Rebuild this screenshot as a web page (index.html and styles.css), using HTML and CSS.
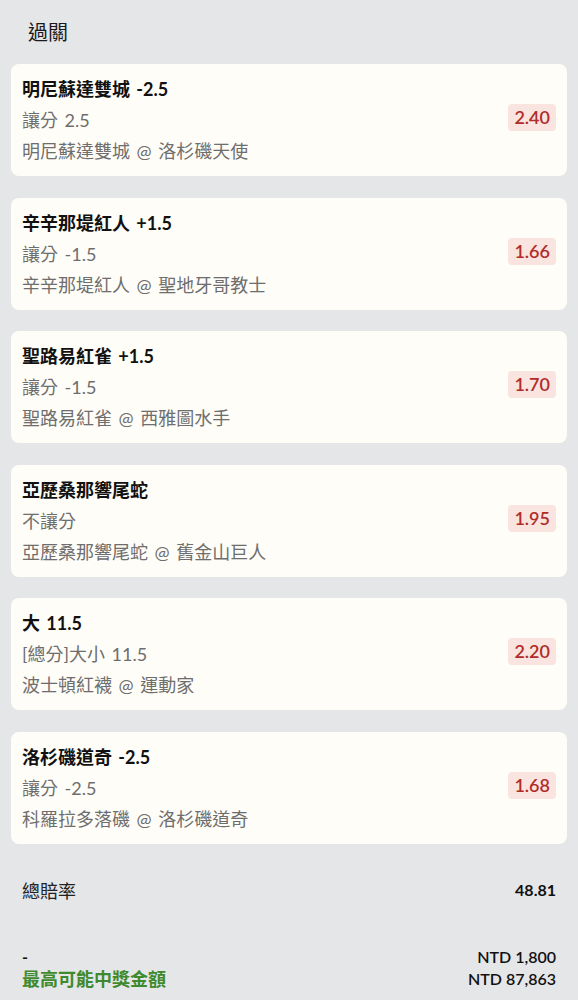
FILE: index.html
```html
<!DOCTYPE html>
<html lang="zh-Hant">
<head>
<meta charset="utf-8">
<link rel="stylesheet" href="styles.css">
</head>
<body>
<div class="page">
  <div class="header">過關</div>
  <div class="cards">
    <div class="card">
      <div class="info">
        <div class="title">明尼蘇達雙城 -2.5</div>
        <div class="sub">讓分 2.5</div>
        <div class="sub">明尼蘇達雙城 @ 洛杉磯天使</div>
      </div>
      <div class="odds">2.40</div>
    </div>
    <div class="card">
      <div class="info">
        <div class="title">辛辛那堤紅人 +1.5</div>
        <div class="sub">讓分 -1.5</div>
        <div class="sub">辛辛那堤紅人 @ 聖地牙哥教士</div>
      </div>
      <div class="odds">1.66</div>
    </div>
    <div class="card">
      <div class="info">
        <div class="title">聖路易紅雀 +1.5</div>
        <div class="sub">讓分 -1.5</div>
        <div class="sub">聖路易紅雀 @ 西雅圖水手</div>
      </div>
      <div class="odds">1.70</div>
    </div>
    <div class="card">
      <div class="info">
        <div class="title">亞歷桑那響尾蛇</div>
        <div class="sub">不讓分</div>
        <div class="sub">亞歷桑那響尾蛇 @ 舊金山巨人</div>
      </div>
      <div class="odds">1.95</div>
    </div>
    <div class="card">
      <div class="info">
        <div class="title">大 11.5</div>
        <div class="sub">[總分]大小 11.5</div>
        <div class="sub">波士頓紅襪 @ 運動家</div>
      </div>
      <div class="odds">2.20</div>
    </div>
    <div class="card">
      <div class="info">
        <div class="title">洛杉磯道奇 -2.5</div>
        <div class="sub">讓分 -2.5</div>
        <div class="sub">科羅拉多落磯 @ 洛杉磯道奇</div>
      </div>
      <div class="odds">1.68</div>
    </div>
  </div>
  <div class="total">
    <span class="total-label">總賠率</span>
    <span class="total-value">48.81</span>
  </div>
  <div class="payout">
    <div class="payout-left">
      <div class="dash">-</div>
      <div class="max-label">最高可能中獎金額</div>
    </div>
    <div class="payout-right">
      <div class="amount">NTD 1,800</div>
      <div class="amount">NTD 87,863</div>
    </div>
  </div>
</div>
</body>
</html>
```

FILE: styles.css
```css
* { box-sizing: border-box; }
html, body {
  margin: 0;
  padding: 0;
  background: #e5e6e8;
}
body {
  font-family: "Lato", "Noto Sans CJK TC", sans-serif;
  color: #111;
}
.page {
  padding: 0 11px;
}
.header {
  font-size: 20px;
  line-height: 28px;
  padding: 18px 17px;
  color: #1a1a1a;
}
.cards {
  display: flex;
  flex-direction: column;
  gap: 21.6px;
}
.card {
  background: #fffdf7;
  border-radius: 8px;
  height: 112px;
  padding: 10px 11px 9px;
  display: flex;
  justify-content: space-between;
  align-items: center;
}
.info {
  display: flex;
  flex-direction: column;
}
.title {
  font-size: 18px;
  font-weight: 700;
  line-height: 31px;
  word-spacing: 2px;
  color: #111;
}
.sub {
  font-size: 18px;
  line-height: 31px;
  word-spacing: 2px;
  color: #6e6e6e;
}
.odds {
  background: #f9e4df;
  color: #b12c29;
  font-size: 18px;
  font-weight: 600;
  line-height: 27px;
  height: 27px;
  padding: 0 6px;
  border-radius: 4px;
  margin-bottom: 6px;
}
.total {
  display: flex;
  justify-content: space-between;
  align-items: center;
  margin-top: 32px;
  padding: 0 11px;
  height: 28px;
}
.total-label {
  font-size: 18px;
  color: #222;
}
.total-value {
  font-size: 16px;
  font-weight: 700;
  color: #111;
}
.payout {
  display: flex;
  justify-content: space-between;
  margin-top: 42px;
  padding: 0 11px;
}
.payout-left, .payout-right {
  display: flex;
  flex-direction: column;
}
.payout-right { align-items: flex-end; }
.dash {
  font-size: 16px;
  line-height: 22px;
  font-weight: 700;
}
.max-label {
  font-size: 18px;
  line-height: 22px;
  font-weight: 700;
  color: #3f8a2c;
}
.amount {
  font-size: 16px;
  line-height: 22px;
  font-weight: 600;
  color: #111;
}
```
